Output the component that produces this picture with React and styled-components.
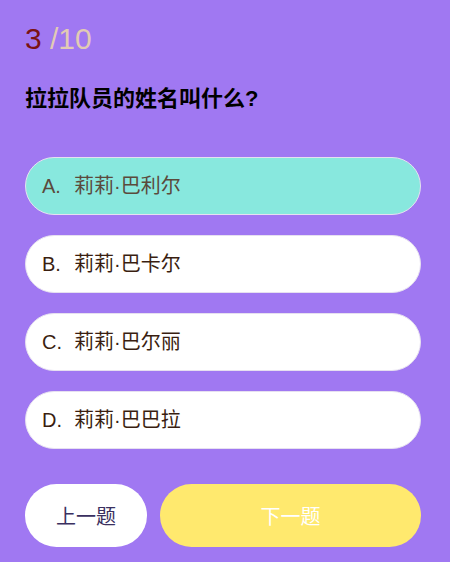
import styled, { createGlobalStyle } from "styled-components";

const GlobalStyle = createGlobalStyle`
  html, body {
    margin: 0;
    padding: 0;
    background: #a078f2;
    font-family: "Liberation Sans", "Noto Sans CJK SC", sans-serif;
  }
`;

const Page = styled.div`
  width: 450px;
  height: 562px;
  box-sizing: border-box;
  padding: 21px 29px 0 25px;
  background: #a078f2;
`;

const Progress = styled.div`
  font-size: 30px;
  line-height: 36px;
`;

const Current = styled.span`
  color: #7a1212;
`;

const Total = styled.span`
  color: #e2cbb4;
`;

const Question = styled.h2`
  margin: 27px 0 0;
  font-size: 22px;
  line-height: 30px;
  font-weight: 700;
  color: #000;
`;

const Options = styled.div`
  display: flex;
  flex-direction: column;
  gap: 20px;
  margin-top: 43px;
`;

const Option = styled.div`
  height: 58px;
  box-sizing: border-box;
  line-height: 56px;
  padding-left: 16px;
  border-radius: 29px;
  border: 1px solid #e6e0f0;
  background: ${(p) => (p.$active ? "#88e8de" : "#fff")};
  color: ${(p) => (p.$active ? "#5b4a3c" : "#3a1e10")};
  font-size: 20px;
  white-space: nowrap;
`;

const Letter = styled.span`
  display: inline-block;
  width: 32px;
  font-size: 20px;
`;

const Footer = styled.div`
  display: flex;
  gap: 13px;
  margin-top: 35px;
`;

const Button = styled.button`
  height: 63px;
  border: none;
  border-radius: 32px;
  padding: 0;
  font-family: "Noto Sans CJK SC", sans-serif;
  font-size: 20px;
  width: ${(p) => (p.$primary ? "261px" : "122px")};
  background: ${(p) => (p.$primary ? "#ffe96e" : "#fff")};
  color: ${(p) => (p.$primary ? "#fff" : "#3a3060")};
`;

const options = [
  { key: "A", text: "莉莉·巴利尔" },
  { key: "B", text: "莉莉·巴卡尔" },
  { key: "C", text: "莉莉·巴尔丽" },
  { key: "D", text: "莉莉·巴巴拉" },
];

export default function App() {
  return (
    <Page>
      <GlobalStyle />
      <Progress>
        <Current>3</Current> <Total>/10</Total>
      </Progress>
      <Question>拉拉队员的姓名叫什么?</Question>
      <Options>
        {options.map((o) => (
          <Option key={o.key} $active={o.key === "A"}>
            <Letter>{o.key}.</Letter>
            {o.text}
          </Option>
        ))}
      </Options>
      <Footer>
        <Button>上一题</Button>
        <Button $primary>下一题</Button>
      </Footer>
    </Page>
  );
}
